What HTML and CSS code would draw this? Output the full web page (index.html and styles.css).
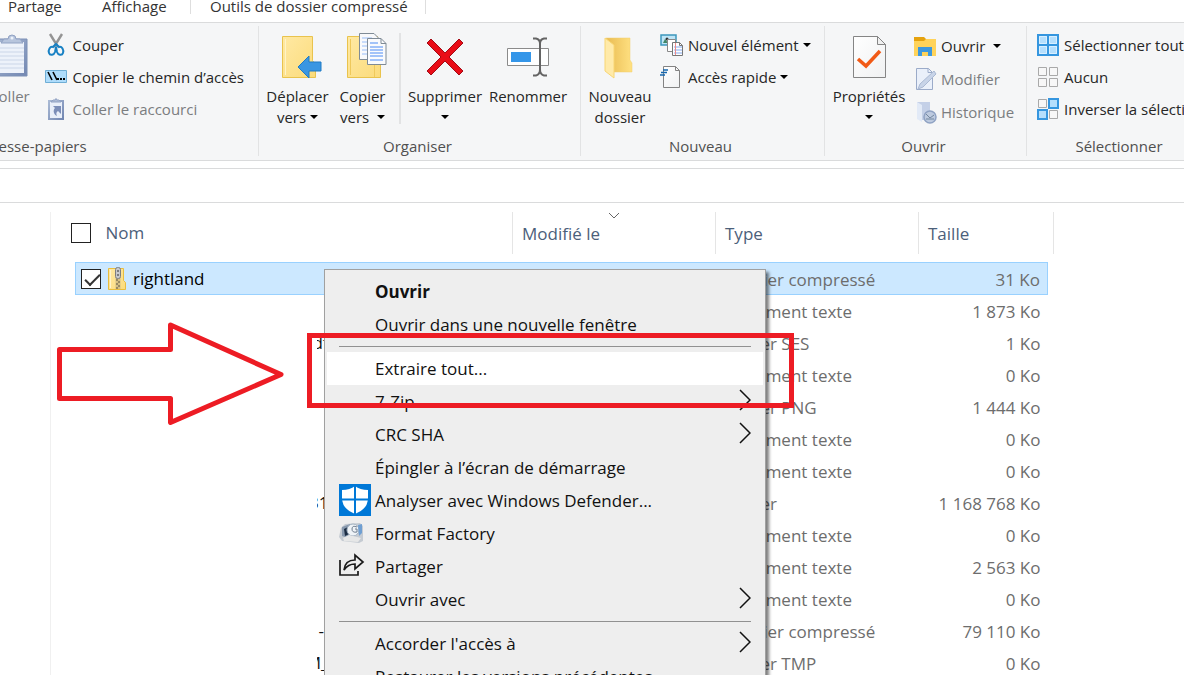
FILE: index.html
```html
<!DOCTYPE html>
<html lang="fr">
<head>
<meta charset="utf-8">
<title>Explorateur de fichiers</title>
<link rel="stylesheet" href="styles.css">
</head>
<body>
<svg class="defs" aria-hidden="true">
  <defs>
    <symbol id="caret" viewBox="0 0 8 4"><path d="M0 0h8L4 4z" fill="#000"/></symbol>
    <symbol id="chevron" viewBox="0 0 12 22"><path d="M1 1l10 10L1 21" fill="none" stroke="#111" stroke-width="1.5"/></symbol>
    <linearGradient id="folder" x1="0" x2="1" y1="0" y2="1"><stop offset="0" stop-color="#ffe9a3"/><stop offset="1" stop-color="#fbdb7b"/></linearGradient>
    <linearGradient id="folderBack" x1="0" x2="1"><stop offset="0" stop-color="#e9bb52"/><stop offset="1" stop-color="#ffe182"/></linearGradient>
    <linearGradient id="board" x1="0" x2="1" y1="0" y2="1"><stop offset="0" stop-color="#a9b9d4"/><stop offset="1" stop-color="#7287b2"/></linearGradient>
    <linearGradient id="paper" x1="0" x2="1" y1="0" y2="1"><stop offset="0" stop-color="#fff"/><stop offset="1" stop-color="#f0f1f2"/></linearGradient>
  </defs>
</svg>
<div class="window">
  <nav class="tabs">
    <a href="#" class="tab tab-share">Partage</a>
    <a href="#" class="tab tab-view">Affichage</a>
    <a href="#" class="tab tab-tools">Outils de dossier compressé</a>
  </nav>

  <div class="ribbon">
    <section class="group group-clipboard">
      <div class="body">
        <button class="big paste muted">
          <svg width="44" height="46" viewBox="0 0 44 46"><path d="M7 6h33v37H7z" fill="url(#board)" stroke="#7d90b6"/><path d="M10 9h27v31H10z" fill="#edf2fa"/><path d="M10 15h27M10 19h27M10 23h27M10 27h27M10 31h27M10 35h27" stroke="#cbd6e8"/><path d="M14 10l3-4h4a4 4 0 0 1 8 0h4l3 4z" fill="#b7c5dd" stroke="#91a2c3"/><circle cx="25" cy="5" r="1.5" fill="#edf2fa"/></svg>
          <span>Coller</span>
        </button>
        <div class="stack">
          <button class="small"><svg width="22" height="24" viewBox="0 0 22 24"><path d="M5 1l8 13M17 1L9 14" stroke="#949494" stroke-width="2.4" fill="none"/><path d="M11 11l-3 3c-3-1-5 3-4 6s5 2 6-1l1-5 1 5c1 3 5 4 6 1s-1-7-4-6z" fill="none" stroke="#1881c4" stroke-width="2"/></svg>Couper</button>
          <button class="small"><svg width="22" height="14" viewBox="0 0 22 14"><path d="M.5.5h21v12H.5z" fill="#aedcfb" stroke="#6faed5"/><path d="M3 2l4 8M8 2l4 8" stroke="#000" stroke-width="1.6"/><path d="M12 8h2v2h-2zM15 8h2v2h-2zM18 8h2v2h-2z"/></svg>Copier le chemin d’accès</button>
          <button class="small muted"><svg width="22" height="24" viewBox="0 0 22 24"><path d="M4 4h14v18H4z" fill="#e9eff9" stroke="url(#board)" stroke-width="2"/><path d="M6 5l2-2h2q1-3 2 0h2l2 2z" fill="#aebcd6" stroke="#91a2c3"/><path d="M8 9h8v8l-3-3c-2 1-2 3-1 5-4-2-4-6-2-8z" fill="#7c8eb8"/></svg>Coller le raccourci</button>
        </div>
      </div>
      <h2>Presse-papiers</h2>
    </section>

    <section class="group group-organize">
      <div class="body">
        <button class="big w-move">
          <svg width="44" height="46" viewBox="0 0 44 46"><path d="M6.500 3.500h30v24l3 4v13h-33z" fill="url(#folder)" stroke="#e9c34d"/><path d="M9.500 6v36" stroke="#fff3c6"/><path d="M22 34l11-11v6h12v9H33v7z" fill="#3a96e2" stroke="#1f7bc5"/></svg>
          <span>Déplacer<br>vers <svg class="caret"><use href="#caret"/></svg></span>
        </button>
        <button class="big w-copy">
          <svg width="44" height="46" viewBox="0 0 44 46"><path d="M6.500 3.500h30v24l3 4v13h-33z" fill="url(#folder)" stroke="#e9c34d"/><path d="M9.500 6v36M33.500 28v16" stroke="#efc95c"/><path d="M18.500.5H33l5 5v21H18.500z" fill="#f8f9fb" stroke="#7f8b96"/><path d="M21 5h10M21 9h5M21 13h5M21 17h5M21 21h5" stroke="#98bdf8"/><path d="M26.500 5.500H40l5 5v21H26.500z" fill="#fafbfd" stroke="#7f8b96"/><path d="M40 5.500v5h5" fill="none" stroke="#7f8b96"/><path d="M29 10h8M29 14h13M29 17h13M29 20h13M29 23h13M29 27h13" stroke="#4c8cf5"/></svg>
          <span>Copier<br>vers&nbsp; <svg class="caret"><use href="#caret"/></svg></span>
        </button>
        <div class="rule"></div>
        <button class="big w-delete">
          <svg width="44" height="46" viewBox="0 0 44 46"><path d="M4 10l4-4 14 14L36 6l4 4-14 14 14 14-4 4-14-14L8 42l-4-4 14-14z" fill="#e90d17" stroke="#a30b16"/></svg>
          <span>Supprimer<br><svg class="caret"><use href="#caret"/></svg></span>
        </button>
        <button class="big w-rename">
          <svg width="44" height="46" viewBox="0 0 44 46"><path d="M1.500 15.500h41v17h-41z" fill="#fff" stroke="#8b8b8b"/><path d="M5 19h20v10H5z" fill="#3496e9"/><path d="M27 5.500h3q4 1 4 5v26q0 5-4 6h-3M41 5.500h-3q-4 1-4 5v26q0 5 4 6h3" fill="none" stroke="#646464" stroke-width="2"/></svg>
          <span>Renommer</span>
        </button>
      </div>
      <h2>Organiser</h2>
    </section>

    <section class="group group-new">
      <div class="body">
        <button class="big w-new">
          <svg width="44" height="46" viewBox="0 0 44 46"><path d="M8 5h24v22l2 3v9H16z" fill="url(#folderBack)" stroke="#f0ce6c" stroke-width=".5"/><path d="M7 5l9 7v33L7 38z" fill="#ffeaa9" stroke="#f8d674"/></svg>
          <span>Nouveau<br>dossier</span>
        </button>
        <div class="stack">
          <button class="small"><svg width="24" height="24" viewBox="0 0 24 24"><path d="M1 2h15v10H1z" fill="#bfe5f6" stroke="#3c97bc" stroke-width="1.500"/><path d="M3 10l2-4 3 4z" fill="#418866"/><circle cx="7" cy="6" r="1.500" fill="#333"/><path d="M7.500 6.500h8v12h-8z" fill="#fff" stroke="#888"/><path d="M12.500 9.500h7l3 3v10h-10z" fill="#fff" stroke="#777"/><path d="M14 14h8M14 17h8M14 20h8" stroke="#82aaf0"/><path d="M15.500 10v12" stroke="#ee8c8c"/><path d="M19.500 9.500v3h3" fill="none" stroke="#777"/></svg>Nouvel élément <svg class="caret"><use href="#caret"/></svg></button>
          <button class="small"><svg width="24" height="24" viewBox="0 0 24 24"><path d="M3.500 1.500h12l4 4v17h-16z" fill="url(#paper)" stroke="#838383"/><path d="M15.500 1.500v4h4" fill="none" stroke="#838383"/><path d="M3 5h5M1 7.500h6M0 10h5" stroke="#1667ae" stroke-width="1.500"/></svg>Accès rapide <svg class="caret"><use href="#caret"/></svg></button>
        </div>
      </div>
      <h2>Nouveau</h2>
    </section>

    <section class="group group-open">
      <div class="body">
        <button class="big w-props">
          <svg width="44" height="46" viewBox="0 0 44 46"><path d="M6.500 3.500h24l8 8v33h-32z" fill="url(#paper)" stroke="#858585"/><path d="M30.500 3.500v8h8z" fill="#f0f0f0" stroke="#858585"/><path d="M11 26l8 7 14-15" fill="none" stroke="#f15a16" stroke-width="3.500"/></svg>
          <span>Propriétés<br><svg class="caret"><use href="#caret"/></svg></span>
        </button>
        <div class="stack stack-open">
          <button class="small"><svg width="24" height="24" viewBox="0 0 24 24"><path d="M1 5h22v17H1z" fill="#ffd35a"/><path d="M1 3h10l2 2-2 2H1z" fill="#e5a20e"/><path d="M5 13h14v9h-4v-4H9v4H5z" fill="#3d98de"/></svg>Ouvrir <svg class="caret caret-far"><use href="#caret"/></svg></button>
          <button class="small muted"><svg width="24" height="24" viewBox="0 0 24 24"><path d="M3.500 1.500h12l4 4v17h-16z" fill="#eaf0fa" stroke="#9babc9"/><path d="M15 1.500v4h4" fill="none" stroke="#9babc9"/><path d="M21 4l2 3L10 20l-5 2 2-5z" fill="#c8d4e8" stroke="#aab9d3"/></svg>Modifier</button>
          <button class="small muted"><svg width="24" height="24" viewBox="0 0 24 24"><path d="M4 2h13v18H8z" fill="#c4d0e7"/><path d="M4 2l5 3v17l-5-3z" fill="#e2eaf7"/><circle cx="17" cy="17" r="6" fill="#bdcadf" stroke="#8fa2c3" stroke-width="1.500"/><path d="M13 14l4 4 4-3M13 19h8" fill="none" stroke="#73879f"/></svg>Historique</button>
        </div>
      </div>
      <h2>Ouvrir</h2>
    </section>

    <section class="group group-select">
      <div class="body">
        <div class="stack">
          <button class="small"><svg width="22" height="22" viewBox="0 0 22 22"><path d="M1 1h20v20H1zM11 1v20M1 11h20" fill="#b5dffd" stroke="#3596df" stroke-width="2"/><path d="M2.500 2.500h7v7h-7zM12.500 2.500h7v7h-7zM2.500 12.500h7v7h-7zM12.500 12.500h7v7h-7z" fill="none" stroke="#d8efff"/></svg>Sélectionner tout</button>
          <button class="small"><svg width="22" height="22" viewBox="0 0 22 22"><path d="M1.500 1.500h8v8h-8zM12.500 1.500h8v8h-8zM1.500 12.500h8v8h-8zM12.500 12.500h8v8h-8z" fill="#f7f7f7" stroke="#a9a9a9"/></svg>Aucun</button>
          <button class="small"><svg width="22" height="22" viewBox="0 0 22 22"><path d="M1.500 1.500h8v8h-8zM12.500 12.500h8v8h-8z" fill="#f7f7f7" stroke="#a9a9a9"/><path d="M12 1h9v9h-9zM1 12h9v9H1z" fill="#b5dffd" stroke="#3596df" stroke-width="2"/></svg>Inverser la sélection</button>
        </div>
      </div>
      <h2>Sélectionner</h2>
    </section>
  </div>

  <div class="address"></div>

  <main class="files">
    <table>
      <colgroup><col class="c-name"><col class="c-date"><col class="c-type"><col class="c-size"><col class="c-end"></colgroup>
      <thead>
        <tr>
          <th><label class="all"><input type="checkbox">Nom</label></th>
          <th><svg class="sort" viewBox="0 0 12 7"><path d="M1 1l5 5 5-5" fill="none" stroke="#666"/></svg>Modifié le</th>
          <th>Type</th>
          <th colspan="2">Taille</th>
        </tr>
      </thead>
      <tbody>
        <tr class="selected"><td><label class="name"><input type="checkbox" checked><svg width="20" height="24" viewBox="0 0 20 24"><path d="M1.500 1.500h15v12l2 2v7h-17z" fill="url(#folder)" stroke="#e9bd3e"/><path d="M3.500 3v18" stroke="#fff4cb"/><path d="M8.500 11h5v11h-5z" fill="#d5c084"/><path d="M9 13h2M11 15h2M9 17h2M11 19h2M9 21h2" stroke="#5b5542"/><rect x="8.500" y=".5" width="5" height="11" rx="2" fill="#c6c8cc" stroke="#7b7d80"/><path d="M10 4h2M10 8h2" stroke="#333"/></svg>rightland</label></td><td></td><td>Dossier compressé</td><td>31 Ko</td><td></td></tr>
        <tr><td></td><td></td><td>Document texte</td><td>1 873 Ko</td><td></td></tr>
        <tr><td><span class="tail">df</span></td><td></td><td>Fichier SES</td><td>1 Ko</td><td></td></tr>
        <tr><td></td><td></td><td>Document texte</td><td>0 Ko</td><td></td></tr>
        <tr><td></td><td></td><td>Fichier PNG</td><td>1 444 Ko</td><td></td></tr>
        <tr><td></td><td></td><td>Document texte</td><td>0 Ko</td><td></td></tr>
        <tr><td></td><td></td><td>Document texte</td><td>0 Ko</td><td></td></tr>
        <tr><td><span class="tail">31</span></td><td></td><td>Fichier</td><td>1 168 768 Ko</td><td></td></tr>
        <tr><td></td><td></td><td>Document texte</td><td>0 Ko</td><td></td></tr>
        <tr><td></td><td></td><td>Document texte</td><td>2 563 Ko</td><td></td></tr>
        <tr><td></td><td></td><td>Document texte</td><td>0 Ko</td><td></td></tr>
        <tr><td><span class="tail">-&nbsp;</span></td><td></td><td>Dossier compressé</td><td>79 110 Ko</td><td></td></tr>
        <tr><td><span class="tail">M_</span></td><td></td><td>Fichier TMP</td><td>0 Ko</td><td></td></tr>
      </tbody>
    </table>
  </main>

  <div class="menu" role="menu">
    <button role="menuitem" class="default">Ouvrir</button>
    <button role="menuitem">Ouvrir dans une nouvelle fenêtre</button>
    <hr>
    <button role="menuitem" class="hot">Extraire tout...</button>
    <button role="menuitem">7-Zip<svg class="more"><use href="#chevron"/></svg></button>
    <button role="menuitem">CRC SHA<svg class="more"><use href="#chevron"/></svg></button>
    <button role="menuitem">Épingler à l’écran de démarrage</button>
    <button role="menuitem"><svg class="mark" viewBox="0 0 32 32"><path d="M0 0h32v32H0z" fill="#0078d7"/><path d="M16 2q5 4 13 4v8q0 11-13 16Q3 25 3 14V6q8 0 13-4z" fill="#fff"/><path d="M16 1v30M2 15.500h28" stroke="#0078d7" stroke-width="2"/></svg>Analyser avec Windows Defender...</button>
    <button role="menuitem"><svg class="mark" viewBox="0 0 32 32"><path d="M2 11l4-4 15-1 3 3v15l-4 2-17-2-3-4z" fill="#c5cbd2"/><path d="M3 10l8-3 3 4-5 10-6-2z" fill="#8798ad"/><path d="M5 12l4-2 1 7-4 2z" fill="#1b2c43"/><circle cx="14" cy="13" r="6" fill="#eef3f7" stroke="#a4b3c2"/><path d="M18 10q-5-2-5 2t5 3v-3h-2" fill="none" stroke="#6e7d8e"/><path d="M19 8l4-1v9l-3 3z" fill="#6f9fd2"/><path d="M4 21l6-3 12 3-3 4-14-1z" fill="#e6e7e7"/></svg>Format Factory</button>
    <button role="menuitem"><svg class="mark" viewBox="0 0 32 32"><path d="M1 10v15h18v-4" fill="none" stroke="#1a1a1a" stroke-width="1.700"/><path d="M5 20q1-10 11-10V5l8 7-8 7v-5q-7 0-11 6z" fill="none" stroke="#1a1a1a" stroke-width="1.700"/></svg>Partager</button>
    <button role="menuitem">Ouvrir avec<svg class="more"><use href="#chevron"/></svg></button>
    <hr>
    <button role="menuitem">Accorder l'accès à<svg class="more"><use href="#chevron"/></svg></button>
    <button role="menuitem">Restaurer les versions précédentes</button>
  </div>

  <svg class="arrow" viewBox="0 0 230 104" aria-hidden="true"><path d="M3.500 27.500h111V3L225 52.500 114.500 100.500v-24H3.500z" fill="none" stroke="#ed1c24" stroke-width="5" stroke-linejoin="round"/></svg>
  <div class="frame"></div>
</div>
</body>
</html>
```
FILE: styles.css
```css
* { box-sizing: border-box; }

body {
  margin: 0;
  background: #fff;
  color: #262626;
  font: 15px/20px "Open Sans", "Noto Sans", sans-serif;
}

button {
  padding: 0;
  border: 0;
  background: none;
  color: inherit;
  font: inherit;
}

svg { flex: none; overflow: visible; }
.defs { position: absolute; width: 0; height: 0; }

.window {
  position: relative;
  height: 100vh;
  overflow: hidden;
}

/* Tabs */
.tabs {
  display: flex;
  line-height: 12px;
  white-space: nowrap;
}
.tab {
  padding-bottom: 10px;
  color: #333;
  text-decoration: none;
}
.tab-share { padding-left: 8px; width: 102px; }
.tab-view { width: 88px; }
.tab-tools {
  height: 14px;
  padding: 0 17px 0 19px;
  border: solid #dedede;
  border-width: 0 1px;
  margin-bottom: 8px;
}

/* Ribbon */
.ribbon {
  display: flex;
  margin-left: -200px;
  padding: 3px 0 4px;
  border-top: 1px solid #dadbdc;
  border-bottom: 1px solid #dadbdc;
  background: #f5f6f7;
  white-space: nowrap;
}
.group {
  flex: none;
  display: flex;
  flex-direction: column;
  border-right: 1px solid #e2e3e4;
}
.group h2 {
  margin: 0;
  padding-right: 4px;
  color: #505050;
  font-size: 15px;
  font-weight: 400;
  text-align: center;
}
.body {
  display: flex;
  height: 110px;
  padding-top: 3px;
}
.group-clipboard { width: 459px; }
.group-clipboard .body { justify-content: flex-end; padding-right: 14px; }
.group-clipboard h2 { padding: 0 0 0 12px; }
.group-organize { width: 322px; }
.group-organize .body { padding-left: 4px; }
.group-new { width: 244px; }
.group-new .body { padding-left: 3px; }
.group-open { width: 202px; }
.group-open .body { padding-left: 5px; }
.group-select { width: 185px; }
.group-select .body { padding-left: 10px; }
.group-select h2 { padding: 0; }

.big {
  display: flex;
  flex-direction: column;
  align-items: center;
  gap: 7px;
  padding-top: 4px;
  line-height: 21px;
}
.paste { width: 60px; margin-right: 6px; }
.w-move { width: 69px; }
.w-copy { width: 61px; }
.w-delete { width: 84px; }
.w-rename { width: 82px; }
.w-new { width: 72px; }
.w-props { width: 78px; }
.muted { color: #7b7d80; }
.rule {
  width: 2px;
  height: 91px;
  margin: 4px 2px 0 6px;
  background: #e2e3e4;
}
.stack { display: flex; flex-direction: column; }
.small {
  display: flex;
  align-items: center;
  gap: 5px;
  height: 32px;
}
.stack-open { margin-left: 5px; }
.stack-open .small { height: 33px; gap: 4px; }
.group-new .stack { margin-left: 4px; }
.group-new .small { gap: 4px; }
.caret {
  width: 8px;
  height: 4px;
  vertical-align: 4px;
}
.caret-far { margin-left: 4px; }

.address {
  height: 35px;
  margin-top: 7px;
  border: solid #dadbdc;
  border-width: 1px 0;
}

/* File list */
.files {
  margin: 9px 0 0 50px;
  padding-left: 24px;
  border-left: 1px solid #f0f0f0;
}
table {
  width: 978px;
  table-layout: fixed;
  border-collapse: collapse;
  font-size: 17px;
  color: #6d6d6d;
}
.c-name { width: 437px; }
.c-date, .c-type { width: 203px; }
.c-size { width: 129px; }
.c-end { width: 6px; }
th {
  position: relative;
  height: 42px;
  padding: 2px 0 0 9px;
  border-right: 1px solid #e5e5e5;
  color: #4c607a;
  font-weight: 400;
  text-align: left;
}
th:first-child { padding: 0; }
thead::after { content: ""; display: block; height: 8px; }
td {
  height: 32px;
  padding: 2px 7px 0 9px;
  white-space: nowrap;
}
td:first-child { padding: 0 0 0 5px; }
td:nth-child(4) { text-align: right; }
.selected td { height: 33px; }
.selected td:not(:last-child) {
  background: #cce8ff;
  box-shadow: inset 0 1px #99d1ff, inset 0 -1px #99d1ff;
}
.selected td:first-child { border-left: 1px solid #99d1ff; }
.selected td:nth-child(4) { border-right: 1px solid #99d1ff; }
.all, .name { display: flex; align-items: center; }
.all { margin-left: -5px; gap: 15px; }
.name { gap: 6px; color: #000; }
input {
  flex: none;
  appearance: none;
  width: 20px;
  height: 20px;
  margin: 0;
  border: 1px solid #222;
  background: #fff;
}
input:checked::before {
  content: "";
  display: block;
  width: 13px;
  height: 6px;
  margin: 4px 0 0 3px;
  border: solid #333;
  border-width: 0 0 2px 2px;
  rotate: -45deg;
}
.sort {
  position: absolute;
  top: 0;
  left: 95px;
  width: 12px;
  height: 7px;
}
.tail {
  display: flex;
  justify-content: flex-end;
  width: 12px;
  margin-left: 236px;
  overflow: hidden;
  color: #111;
}

/* Context menu */
.menu {
  position: absolute;
  top: 269px;
  left: 324px;
  width: 442px;
  padding: 5px 2px;
  border: 1px solid #a0a0a0;
  background: #eee;
  box-shadow: 3px 3px 3px rgba(0, 0, 0, .5);
  color: #111;
  font-size: 17px;
}
.menu button {
  position: relative;
  display: flex;
  align-items: center;
  width: 100%;
  height: 33px;
  padding: 1px 12px 0 48px;
}
.menu .default { font-weight: 700; }
.menu .hot { background: #fff; }
.menu hr {
  height: 1px;
  margin: 5px 12px;
  border: 0;
  background: #919191;
}
.more { width: 12px; height: 22px; margin: 0 0 4px auto; }
.mark {
  position: absolute;
  top: 0;
  left: 12px;
  width: 32px;
  height: 32px;
}

/* Annotations */
.arrow {
  position: absolute;
  top: 322px;
  left: 56px;
  width: 230px;
  height: 104px;
}
.frame {
  position: absolute;
  top: 333px;
  left: 307px;
  width: 487px;
  height: 75px;
  border: 5px solid #ed1c24;
}
```
